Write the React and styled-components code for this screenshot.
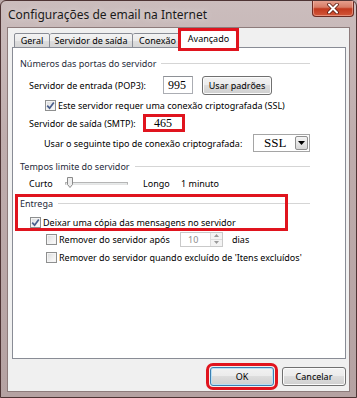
import React from "react"
import styled, { createGlobalStyle } from "styled-components"

const GlobalStyle = createGlobalStyle`
  html, body {
    margin: 0;
    padding: 0;
  }
  body {
    background: #b9a8a8;
    font-family: "Noto Sans", "Open Sans", sans-serif;
    font-size: 9px;
    color: #000;
  }
`

const Window = styled.div`
  width: 357px;
  height: 398px;
  box-sizing: border-box;
  display: flex;
  flex-direction: column;
  background: linear-gradient(to bottom, #cbbdbd 0%, #bfadad 35%, #b5a2a2 100%);
  border: 1px solid #4e3434;
  border-radius: 6px 6px 0 0;
  overflow: hidden;
`

const TitleBar = styled.div`
  height: 26px;
  display: flex;
  align-items: flex-start;
  justify-content: space-between;
  padding-left: 7px;
`

const Title = styled.span`
  margin-top: 5px;
  font-size: 12px;
  color: #1a1a1a;
  text-shadow: 0 0 6px rgba(255, 255, 255, 0.7);
`

const CloseButton = styled.div`
  width: 42px;
  height: 17px;
  margin-right: 2px;
  margin-top: -1px;
  box-sizing: border-box;
  border: 1px solid #6d2b22;
  border-top: none;
  border-radius: 0 0 4px 4px;
  background: linear-gradient(to bottom, #e8a493 0%, #d77c66 45%, #c2391e 55%, #d2583a 100%);
  box-shadow: inset 0 0 0 1px rgba(255, 210, 200, 0.45);
  display: flex;
  align-items: center;
  justify-content: center;
`

const Client = styled.div`
  flex: 1;
  margin: 0 6px 5px 6px;
  background: #f0f0f0;
  border: 1px solid #8d7b7b;
  padding: 3px 3px 5px 4px;
  display: flex;
  flex-direction: column;
`

const TabRow = styled.div`
  height: 17px;
  display: flex;
  align-items: flex-end;
  padding-left: 2px;
  margin-bottom: -1px;
  position: relative;
  z-index: 1;
`

const Tab = styled.div`
  position: relative;
  box-sizing: border-box;
  width: ${(p) => p.w}px;
  height: ${(p) => (p.active ? 18 : 15)}px;
  margin-left: ${(p) => (p.active ? -3 : 0)}px;
  border: 1px solid #898c95;
  border-left-width: ${(p) => (p.first || p.active ? 1 : 0)}px;
  border-bottom: ${(p) => (p.active ? "none" : "1px solid #898c95")};
  border-radius: 2px 2px 0 0;
  background: ${(p) =>
    p.active ? "#fff" : "linear-gradient(to bottom, #f3f3f3 0%, #ebebeb 50%, #dedede 50%, #d6d6d6 100%)"};
  z-index: ${(p) => (p.active ? 2 : 1)};
  display: flex;
  justify-content: center;
  align-items: center;
  padding-bottom: ${(p) => (p.active ? 3 : 0)}px;
  white-space: nowrap;
  overflow: ${(p) => (p.active ? "visible" : "hidden")};

  ${(p) =>
    p.marked &&
    `
    &::after {
      content: "";
      position: absolute;
      top: -3px;
      left: -3px;
      right: -3px;
      bottom: -3px;
      border: 3px solid #e0141e;
    }
  `}
`

const Panel = styled.div`
  flex: 1;
  background: #fff;
  border: 1px solid #898c95;
  display: flex;
  flex-direction: column;
`

const Row = styled.div`
  display: flex;
  align-items: center;
  height: ${(p) => p.h}px;
  margin-top: ${(p) => p.mt}px;
  padding-left: ${(p) => p.indent || 0}px;
  white-space: nowrap;
`

const Header = styled(Row)`
  width: 297px;
  padding-left: 7px;
  box-sizing: border-box;
  color: #1e2a3a;
`

const HeaderLine = styled.div`
  flex: 1;
  height: 1px;
  margin-left: 5px;
  background: #d5d5d5;
`

const Label = styled.span`
  display: inline-block;
  width: ${(p) => (p.w ? `${p.w}px` : "auto")};
  margin-left: ${(p) => p.ml || 0}px;
  color: ${(p) => (p.dim ? "#6d6d6d" : "#000")};
`

const TextBox = styled.div`
  box-sizing: border-box;
  width: ${(p) => p.w}px;
  height: ${(p) => p.h}px;
  border: ${(p) => (p.marked ? "3px solid #e0141e" : "1px solid #abadb3")};
  border-top-color: ${(p) => (p.marked ? "#e0141e" : "#8e9196")};
  background: #fff;
  font-family: "Liberation Serif", "Times New Roman", serif;
  font-size: 12px;
  display: flex;
  align-items: center;
  padding-left: ${(p) => p.pl}px;
`

const Button = styled.div`
  box-sizing: border-box;
  width: ${(p) => p.w}px;
  height: 19px;
  margin-left: ${(p) => p.ml || 0}px;
  border: 1px solid ${(p) => (p.primary ? "#3c7fb1" : "#707070")};
  border-radius: 3px;
  background: linear-gradient(to bottom, #f2f2f2 0%, #ebebeb 50%, #dddddd 50%, #cfcfcf 100%);
  box-shadow: inset 0 0 0 1px ${(p) => (p.primary ? "#b8e0f5" : "#fbfbfb")};
  display: flex;
  align-items: center;
  justify-content: center;
  color: #000;
  ${(p) => p.marked && "outline: 3px solid #e0141e; outline-offset: 1px;"}
`

const Box = styled.span`
  box-sizing: border-box;
  width: 11px;
  height: 11px;
  margin-right: 2px;
  border: 1px solid #8e8f8f;
  background: linear-gradient(135deg, #d9dadb 0%, #f1f1f1 60%, #fdfdfd 100%);
  box-shadow: inset 0 0 0 1px #f4f4f4;
  display: inline-flex;
  align-items: center;
  justify-content: center;
  flex-shrink: 0;
`

const Select = styled.div`
  box-sizing: border-box;
  width: 57px;
  height: 18px;
  border: 1px solid #a5a5a5;
  background: #fff;
  display: flex;
  align-items: center;
  justify-content: space-between;
  padding: 1px;
  font-family: "Liberation Serif", "Times New Roman", serif;
  font-size: 13px;
`

const SelectValue = styled.span`
  padding-left: 9px;
`

const DropButton = styled.span`
  box-sizing: border-box;
  width: 13px;
  height: 14px;
  border: 1px solid #8f8f8f;
  border-radius: 2px;
  background: linear-gradient(to bottom, #f4f4f4 0%, #e6e6e6 50%, #d6d6d6 100%);
  display: flex;
  align-items: center;
  justify-content: center;
`

const Slider = styled.div`
  position: relative;
  width: 65px;
  height: 12px;
`

const Track = styled.div`
  position: absolute;
  left: 2px;
  right: 0;
  top: 5px;
  height: 1px;
  border: 1px solid #b5b5b5;
  border-bottom-color: #e4e4e4;
  background: #e7eaea;
`

const Thumb = styled.svg`
  position: absolute;
  left: 4px;
  top: 0;
`

const Spin = styled.div`
  box-sizing: border-box;
  width: 43px;
  height: 15px;
  border: 1px solid #c9c9c9;
  background: #fff;
  display: flex;
  align-items: center;
  justify-content: space-between;
  color: #8d8d8d;
  padding-left: 7px;
`

const SpinButtons = styled.div`
  width: 11px;
  height: 13px;
  display: flex;
  flex-direction: column;
  border-left: 1px solid #dcdcdc;
`

const SpinHalf = styled.div`
  flex: 1;
  background: #f3f3f3;
  border-bottom: ${(p) => (p.top ? "1px solid #dcdcdc" : "none")};
  display: flex;
  align-items: center;
  justify-content: center;
`

const Marked = styled.div`
  position: relative;
  margin-top: ${(p) => p.mt}px;

  &::after {
    content: "";
    position: absolute;
    top: -2px;
    left: 2px;
    width: 273px;
    height: 37px;
    box-sizing: border-box;
    border: 3px solid #e0141e;
    pointer-events: none;
  }
`

const Footer = styled.div`
  display: flex;
  justify-content: flex-end;
  margin-top: 8px;
`

const Check = ({ checked }) => (
  <Box>
    {checked && (
      <svg width="9" height="9" viewBox="0 0 9 9">
        <path d="M1.2 4.6 L3.6 7.2 L7.8 1.4" fill="none" stroke="#4a5f8c" strokeWidth="1.7" />
      </svg>
    )}
  </Box>
)

const Arrow = ({ up }) => (
  <svg width="5" height="3" viewBox="0 0 5 3">
    <path d={up ? "M0 3 L2.5 0 L5 3 Z" : "M0 0 L2.5 3 L5 0 Z"} fill="#9a9a9a" />
  </svg>
)

const tabs = [
  { label: "Geral", w: 36 },
  { label: "Servidor de saída", w: 83 },
  { label: "Conexão", w: 50 },
  { label: "Avançado", w: 57, active: true },
]

const App = () => {
  return (
    <>
      <GlobalStyle />
      <Window>
        <TitleBar>
          <Title>Configurações de email na Internet</Title>
          <CloseButton>
            <svg width="12" height="11" viewBox="0 0 12 11">
              <path d="M2 1.5 L10 9.5 M10 1.5 L2 9.5" stroke="#5a1a10" strokeWidth="3.6" strokeLinecap="round" />
              <path d="M2 1.5 L10 9.5 M10 1.5 L2 9.5" stroke="#fff" strokeWidth="2" strokeLinecap="round" />
            </svg>
          </CloseButton>
        </TitleBar>

        <Client>
          <TabRow>
            {tabs.map((t, i) => (
              <Tab key={t.label} w={t.w} active={t.active} marked={t.active} first={i === 0}>
                {t.label}
              </Tab>
            ))}
          </TabRow>

          <Panel>
            <Header h={14} mt={8}>
              Números das portas do servidor
              <HeaderLine />
            </Header>
            <Row h={20} mt={5} indent={16}>
              <Label w={134}>Servidor de entrada (POP3):</Label>
              <TextBox w={30} h={18} pl={4}>995</TextBox>
              <Button w={70} ml={9}>Usar padrões</Button>
            </Row>
            <Row h={14} mt={3} indent={32}>
              <Check checked />
              <Label>Este servidor requer uma conexão criptografada (SSL)</Label>
            </Row>
            <Row h={18} mt={2} indent={16}>
              <Label w={114}>Servidor de saída (SMTP):</Label>
              <TextBox w={42} h={18} pl={8} marked>465</TextBox>
            </Row>
            <Row h={18} mt={2} indent={31}>
              <Label w={209}>Usar o seguinte tipo de conexão criptografada:</Label>
              <Select>
                <SelectValue>SSL</SelectValue>
                <DropButton>
                  <svg width="7" height="4" viewBox="0 0 7 4">
                    <path d="M0 0 L3.5 4 L7 0 Z" fill="#000" />
                  </svg>
                </DropButton>
              </Select>
            </Row>

            <Header h={14} mt={7}>
              Tempos limite do servidor
              <HeaderLine />
            </Header>
            <Row h={16} mt={2} indent={16}>
              <Label w={34}>Curto</Label>
              <Slider>
                <Track />
                <Thumb width="6" height="11" viewBox="0 0 6 11">
                  <path d="M0.5 0.5 H5.5 V7.5 L3 10.5 L0.5 7.5 Z" fill="#eeeeee" stroke="#8a8a8a" />
                </Thumb>
              </Slider>
              <Label w={38} ml={15}>Longo</Label>
              <Label>1 minuto</Label>
            </Row>

            <Marked mt={5}>
              <Header h={14} mt={0}>
                Entrega
                <HeaderLine />
              </Header>
              <Row h={14} mt={5} indent={17}>
                <Check checked />
                <Label>Deixar uma cópia das mensagens no servidor</Label>
              </Row>
            </Marked>
            <Row h={16} mt={2} indent={33}>
              <Check />
              <Label w={121}>Remover do servidor após</Label>
              <Spin>
                10
                <SpinButtons>
                  <SpinHalf top>
                    <Arrow up />
                  </SpinHalf>
                  <SpinHalf>
                    <Arrow />
                  </SpinHalf>
                </SpinButtons>
              </Spin>
              <Label ml={9}>dias</Label>
            </Row>
            <Row h={14} mt={3} indent={33}>
              <Check />
              <Label>Remover do servidor quando excluído de 'Itens excluídos'</Label>
            </Row>
          </Panel>

          <Footer>
            <Button w={64} primary marked>
              OK
            </Button>
            <Button w={64} ml={8}>
              Cancelar
            </Button>
          </Footer>
        </Client>
      </Window>
    </>
  )
}

export default App
